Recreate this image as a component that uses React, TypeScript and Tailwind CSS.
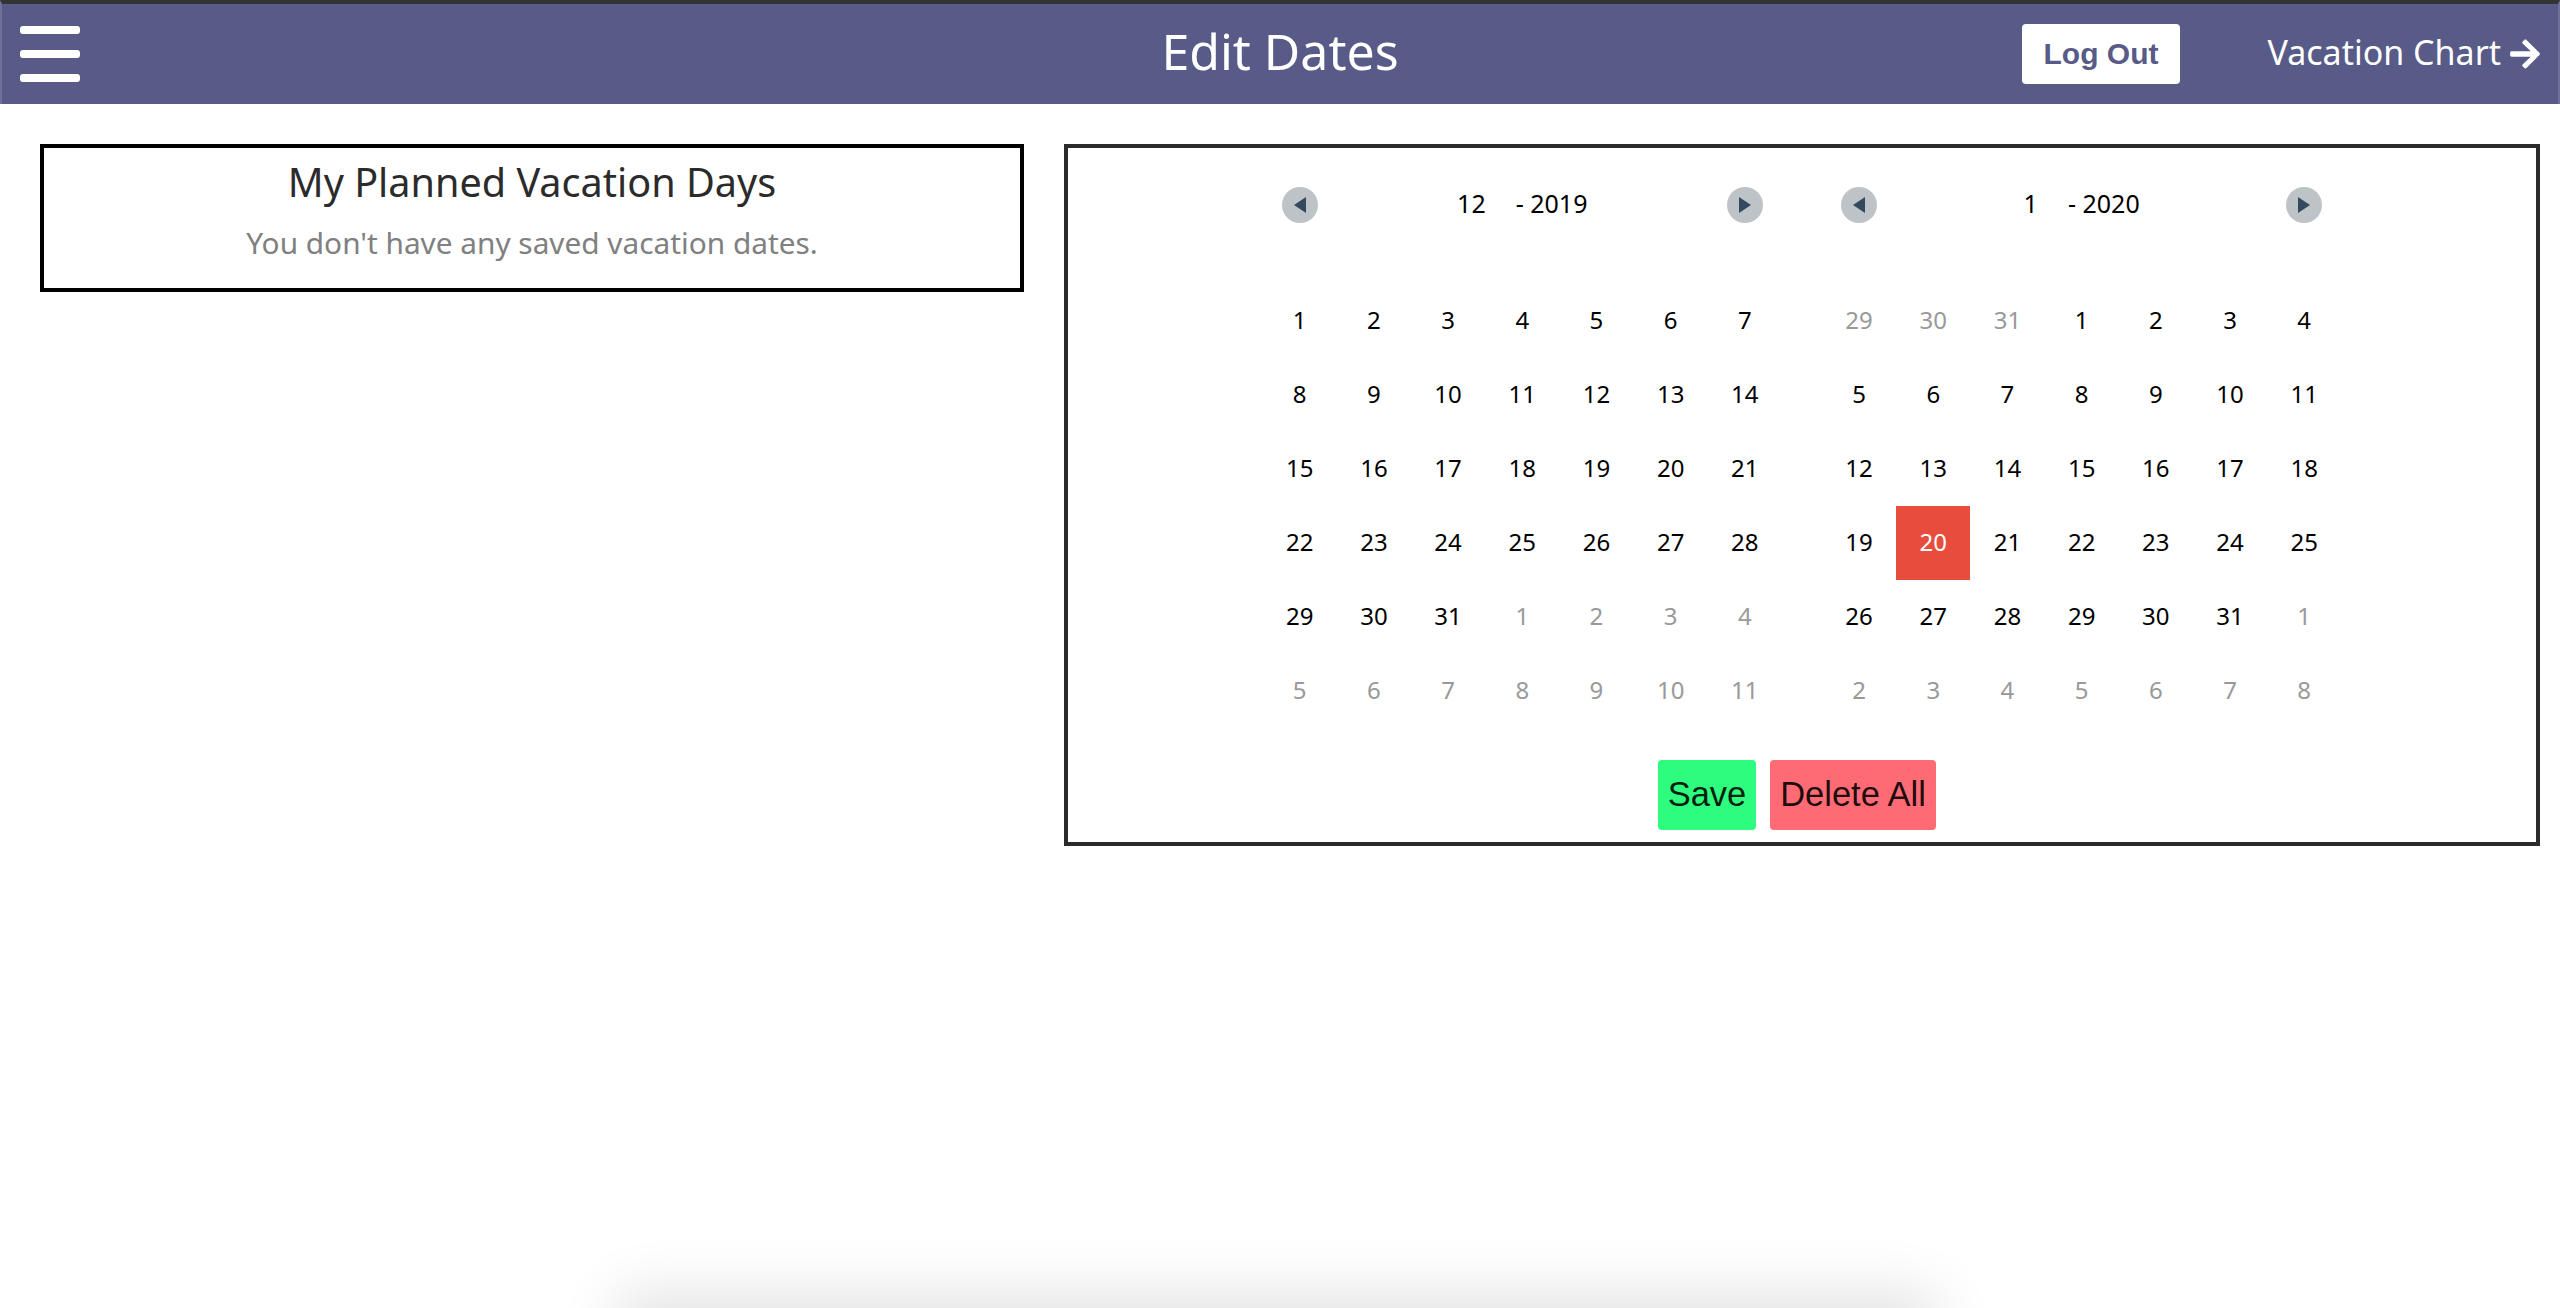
import { FaArrowRight } from "react-icons/fa";

const font = "font-['Noto_Sans','Noto_Sans_CJK_KR',sans-serif]";

const r = (a: number, b: number) => Array.from({ length: b - a + 1 }, (_, i) => a + i);

const dec = [...r(1, 31).map((d) => ({ d, m: false })), ...r(1, 11).map((d) => ({ d, m: true }))];
const jan = [
  ...r(29, 31).map((d) => ({ d, m: true })),
  ...r(1, 31).map((d) => ({ d, m: false })),
  ...r(1, 8).map((d) => ({ d, m: true })),
];

function Nav({ dir }: { dir: "l" | "r" }) {
  return (
    <div className="flex items-center justify-center">
      <button className="flex h-9 w-9 items-center justify-center rounded-full bg-[#bdc3c7]">
        <svg width="14" height="16" viewBox="0 0 14 16">
          <path d={dir === "l" ? "M13 0v16L1 8z" : "M1 0v16l12-8z"} fill="#34495e" />
        </svg>
      </button>
    </div>
  );
}

function Month({ month, year, days, selected }: { month: string; year: string; days: { d: number; m: boolean }[]; selected?: number }) {
  return (
    <div className="w-[519.4px]">
      <div className="grid h-[74px] grid-cols-[repeat(7,74.2px)] items-center">
        <Nav dir="l" />
        <div className="col-span-5 flex items-center justify-center gap-[30px] pb-[3px] text-[25px] text-black">
          <span>{month}</span>
          <span>- {year}</span>
        </div>
        <Nav dir="r" />
      </div>
      <div className="h-[42px]" />
      <div className="grid grid-cols-[repeat(7,74.2px)]">
        {days.map((x, i) => (
          <div
            key={i}
            className={
              "flex h-[74px] items-center justify-center pb-[3px] text-[24px] " +
              (!x.m && x.d === selected ? "bg-[#e74c3c] text-white" : x.m ? "text-[#999999]" : "text-black")
            }
          >
            {x.d}
          </div>
        ))}
      </div>
    </div>
  );
}

export default function App() {
  return (
    <div className={"relative h-[1308px] overflow-hidden bg-white " + font}>
      <header className="grid h-[104px] grid-cols-3 items-center border-x-2 border-t-4 border-x-[#6f7199] border-t-[#333333] bg-[#585a87] px-[18px]">
        <div className="flex flex-col gap-4">
          <span className="h-2 w-[60px] rounded-[3px] bg-white" />
          <span className="h-2 w-[60px] rounded-[3px] bg-white" />
          <span className="h-2 w-[60px] rounded-[3px] bg-white" />
        </div>
        <h1 className="pb-[6px] text-center text-[50px] text-white">Edit Dates</h1>
        <div className="flex items-center justify-end">
          <button className="h-[60px] w-[158px] rounded-[4px] bg-white pb-[2px] font-['Liberation_Sans',sans-serif] text-[30px] font-bold text-[#585a87]">
            Log Out
          </button>
          <span className="flex w-[360px] items-center justify-end gap-[7px] text-[34px] text-white">
            <span className="pb-[3px]">Vacation Chart</span>
            <FaArrowRight className="-mr-[2px] h-[34px] w-[34px]" />
          </span>
        </div>
      </header>
      <main className="flex items-start gap-10 pt-10 pr-5 pl-10">
        <section className="h-[148px] w-[984px] border-4 border-black pt-[6px] text-center">
          <h2 className="text-[39.6px] leading-[56px] text-[#2b2b2b]">My Planned Vacation Days</h2>
          <p className="mt-[13px] text-[29.8px] leading-[40px] text-[#808080]">You don't have any saved vacation dates.</p>
        </section>
        <section className="flex-1 border-4 border-[#2b2b2b] pt-5 pb-3">
          <div className="flex justify-center gap-[40px]">
            <Month month="12" year="2019" days={dec} />
            <Month month="1" year="2020" days={jan} selected={20} />
          </div>
          <div className="mt-8 flex justify-center gap-[14px] pr-[10px] font-['Liberation_Sans',sans-serif] text-[34.5px] text-[rgba(0,0,0,0.9)]">
            <button className="h-[70px] w-[98px] rounded-[4px] bg-[#2efc7f] pb-px">Save</button>
            <button className="h-[70px] w-[166px] rounded-[4px] bg-[#ff6b75] pb-px">Delete All</button>
          </div>
        </section>
      </main>
      <div className="absolute top-[1308px] left-[632px] h-10 w-[1290px] shadow-[0_0_60px_14px_rgba(0,0,0,0.12)]" />
    </div>
  );
}
